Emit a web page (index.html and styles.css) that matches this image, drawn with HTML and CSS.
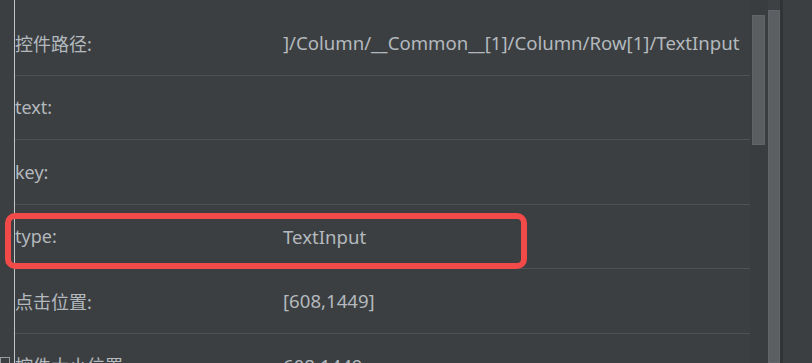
FILE: index.html
```
<!DOCTYPE html>
<html lang="zh-CN">
<head>
    <meta charset="UTF-8">
    <meta name="viewport" content="width=device-width, initial-scale=1.0">
    <title>控件属性</title>
    <link rel="stylesheet" href="styles.css">
</head>
<body>
    <div class="panel">
        <div class="gutter">
            <span class="gutter-icon"></span>
        </div>

        <div class="props">
            <div class="prop-row">
                <span class="prop-name">控件路径:</span>
                <span class="prop-value">]/Column/__Common__[1]/Column/Row[1]/TextInput</span>
            </div>
            <div class="prop-row">
                <span class="prop-name">text:</span>
                <span class="prop-value"></span>
            </div>
            <div class="prop-row">
                <span class="prop-name">key:</span>
                <span class="prop-value"></span>
            </div>
            <div class="prop-row highlighted">
                <span class="prop-name">type:</span>
                <span class="prop-value">TextInput</span>
                <span class="highlight-box"></span>
            </div>
            <div class="prop-row">
                <span class="prop-name">点击位置:</span>
                <span class="prop-value">[608,1449]</span>
            </div>
            <div class="prop-row">
                <span class="prop-name">控件大小位置</span>
                <span class="prop-value">608,1449</span>
            </div>
        </div>

        <div class="inner-track">
            <div class="inner-thumb"></div>
        </div>
        <div class="outer-track">
            <div class="outer-thumb"></div>
        </div>
        <div class="edge"></div>
    </div>
</body>
</html>
```

FILE: styles.css
```
* {
    box-sizing: border-box;
    margin: 0;
    padding: 0;
}

body {
    font-family: "Noto Sans", "Noto Sans CJK SC", sans-serif;
    font-size: 18px;
    color: #b3b9be;
    background-color: #3c3f41;
    overflow: hidden;
}

.panel {
    display: flex;
    height: 363px;
    overflow: hidden;
}

.gutter {
    width: 15px;
    flex-shrink: 0;
    border-right: 1px solid #c4c4c4;
    display: flex;
    flex-direction: column;
    justify-content: flex-end;
}
.gutter-icon {
    width: 10px;
    height: 6px;
    border: 1px solid #9a9a9a;
    border-bottom: none;
}

.props {
    width: 735px;
    flex-shrink: 0;
    padding-top: 11px;
}

.prop-row {
    display: flex;
    align-items: center;
    height: 64.5px;
    border-bottom: 1px solid #4f5153;
    white-space: nowrap;
}
.prop-name {
    width: 268px;
    flex-shrink: 0;
}
.prop-value {
    font-size: 18.6px;
}

.highlighted {
    position: relative;
}
.highlight-box {
    position: absolute;
    left: -10px;
    top: 8px;
    width: 522px;
    height: 56px;
    border: 6px solid #f24a49;
    border-radius: 10px;
}

.inner-track {
    width: 18px;
    flex-shrink: 0;
    background-color: #3a3d3f;
    padding: 15px 3px 0 2px;
}
.inner-thumb {
    height: 130px;
    background-color: #5a5e60;
    border: 1px solid #606466;
}

.outer-track {
    width: 12px;
    flex-shrink: 0;
    padding-top: 10px;
    background-color: #3e4143;
}
.outer-thumb {
    height: 100%;
    background-color: #5b5f61;
    border: 1px solid #62666a;
}

.edge {
    width: 3px;
    flex-shrink: 0;
    background-color: #313335;
}
```
